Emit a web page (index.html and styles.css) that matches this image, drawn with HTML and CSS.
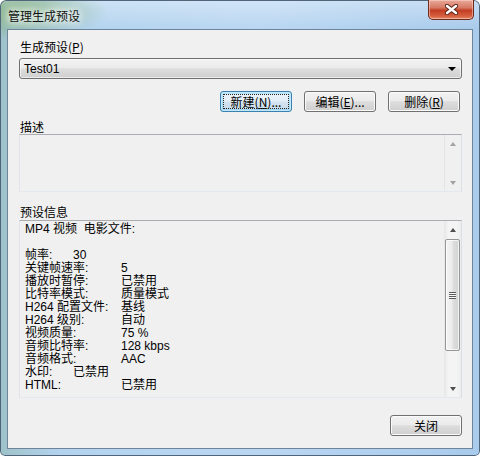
FILE: index.html
```html
<!DOCTYPE html>
<html lang="zh-CN">
<head>
  <meta charset="UTF-8">
  <title>管理生成预设</title>
  <link rel="stylesheet" href="styles.css">
</head>
<body>
<div class="window">
  <div class="titlebar">
    <span class="title">管理生成预设</span>
    <button class="close" title="关闭">
      <svg width="13" height="11" viewBox="0 0 13 11">
        <path d="M2 2l9 7M11 2L2 9" stroke="#5b2418" stroke-width="4.4" stroke-linecap="round"/>
        <path d="M2 2l9 7M11 2L2 9" stroke="#fff" stroke-width="2.4" stroke-linecap="round"/>
      </svg>
    </button>
  </div>

  <div class="client">
    <label class="caption">生成预设(<u>P</u>)</label>
    <div class="combo">
      <span>Test01</span>
      <i class="drop"></i>
    </div>

    <div class="actions">
      <button class="btn default">新建(<u>N</u>)...</button>
      <button class="btn">编辑(<u>E</u>)...</button>
      <button class="btn">删除(<u>R</u>)</button>
    </div>

    <label class="caption gap">描述</label>
    <div class="textbox desc">
      <div class="text"></div>
      <div class="scrollbar off">
        <div class="sb-btn up"></div>
        <div class="track"></div>
        <div class="sb-btn down"></div>
      </div>
    </div>

    <label class="caption gap2">预设信息</label>
    <div class="textbox info">
      <div class="text">
        <div class="row">MP4 视频&nbsp;&nbsp;电影文件:</div>
        <div class="row">&nbsp;</div>
        <div class="row"><span class="k s">帧率:</span>30</div>
        <div class="row"><span class="k">关键帧速率:</span>5</div>
        <div class="row"><span class="k">播放时暂停:</span>已禁用</div>
        <div class="row"><span class="k">比特率模式:</span>质量模式</div>
        <div class="row"><span class="k">H264 配置文件:</span>基线</div>
        <div class="row"><span class="k">H264 级别:</span>自动</div>
        <div class="row"><span class="k">视频质量:</span>75 %</div>
        <div class="row"><span class="k">音频比特率:</span>128 kbps</div>
        <div class="row"><span class="k">音频格式:</span>AAC</div>
        <div class="row"><span class="k s">水印:</span>已禁用</div>
        <div class="row"><span class="k">HTML:</span>已禁用</div>
      </div>
      <div class="scrollbar">
        <div class="sb-btn up"></div>
        <div class="track">
          <div class="thumb"><i></i></div>
        </div>
        <div class="sb-btn down"></div>
      </div>
    </div>

    <div class="footer">
      <button class="btn">关闭</button>
    </div>
  </div>
</div>
</body>
</html>
```

FILE: styles.css
```css
* {
  box-sizing: border-box;
}
body {
  margin: 0;
  font-family: "Liberation Sans", "Noto Sans CJK SC", sans-serif;
  font-size: 12px;
  color: #000;
}
u {
  text-decoration: underline;
  text-underline-offset: 1px;
}

/* window frame */
.window {
  width: 480px;
  height: 456px;
  display: flex;
  flex-direction: column;
  padding: 0 7px 7px 7px;
  border-radius: 6px 6px 5px 5px;
  background:
    radial-gradient(ellipse 110px 34px at 20px 12px, rgba(120, 170, 110, .75), rgba(120, 170, 110, 0) 80%),
    linear-gradient(180deg, rgba(255, 255, 255, .35), rgba(255, 255, 255, 0) 28px),
    linear-gradient(90deg, #9ec2c9 0, #b3d3ee 60px, #bad7f2 260px, #a9cbec 480px);
  box-shadow: inset 0 0 0 1px #51657a;
}
.titlebar {
  height: 29px;
  display: flex;
  justify-content: space-between;
}
.title {
  align-self: center;
  padding-left: 1px;
  margin-top: 1px;
  font-family: "Noto Sans CJK SC", sans-serif;
  font-size: 12px;
  color: #111;
  text-shadow: 0 0 8px #fff, 0 0 8px #fff, 0 0 12px #fff;
}
.close {
  width: 46px;
  height: 20px;
  margin-right: -1px;
  padding: 0;
  border: 1px solid #6e2a1e;
  border-top: none;
  border-radius: 0 0 5px 5px;
  background: linear-gradient(180deg, #e9a99a 0, #d67a64 40%, #c23d22 55%, #d5603f 85%, #e48a6a 100%);
  box-shadow: inset 0 0 0 1px rgba(255, 220, 210, .5);
  display: flex;
  align-items: center;
  justify-content: center;
}

/* dialog body */
.client {
  flex: 1;
  display: flex;
  flex-direction: column;
  padding: 9px 10px 0 11px;
  background: #f0f0f0;
  border: 1px solid #6e849b;
  font-family: "Noto Sans CJK SC", sans-serif;
}
.caption {
  display: block;
  line-height: 15px;
  height: 15px;
  padding-left: 1px;
}
.caption.gap {
  margin-top: 7px;
}
.caption.gap2 {
  margin-top: 12px;
  margin-bottom: 1px;
}

.combo {
  margin-top: 4px;
  height: 21px;
  display: flex;
  align-items: center;
  justify-content: space-between;
  padding: 0 5px 0 4px;
  border: 1px solid #707070;
  border-radius: 3px;
  background: linear-gradient(180deg, #f2f2f2, #ebebeb 45%, #dddddd 52%, #cfcfcf);
  box-shadow: inset 0 0 0 1px rgba(255, 255, 255, .6);
  font-family: "Liberation Sans", "Noto Sans CJK SC", sans-serif;
}
.drop {
  width: 0;
  height: 0;
  border-left: 4px solid transparent;
  border-right: 4px solid transparent;
  border-top: 4px solid #000;
}

.actions {
  margin-top: 12px;
  padding-right: 2px;
  display: flex;
  justify-content: flex-end;
  gap: 12px;
}
.btn {
  width: 72px;
  height: 21px;
  padding: 0;
  font-family: "Noto Sans CJK SC", sans-serif;
  font-size: 12px;
  color: #000;
  border: 1px solid #707070;
  border-radius: 3px;
  background: linear-gradient(180deg, #f2f2f2, #ebebeb 45%, #dddddd 52%, #cfcfcf);
  box-shadow: inset 0 0 0 1px #fbfbfb;
}
.btn.default {
  border-color: #3c7fb1;
  background: linear-gradient(180deg, #eef5fa, #e3eef6 45%, #d4e4f0 52%, #c5d9e8);
  box-shadow: inset 0 0 0 1px #bfe8fb, inset 0 0 0 2px rgba(120, 210, 250, .45);
  outline: 1px dotted #222;
  outline-offset: -4px;
}

/* text areas */
.textbox {
  display: flex;
  border: 1px solid;
  border-color: #abadb3 #dbdfe6 #e3e9ef #e2e3ea;
  background: #f0f0f0;
}
.textbox .text {
  flex: 1;
}
.desc {
  height: 58px;
}
.info {
  height: 178px;
}
.info .text {
  padding: 2px 0 0 5px;
  line-height: 13px;
  white-space: nowrap;
  overflow: hidden;
  font-family: "Liberation Sans", "Noto Sans CJK SC", sans-serif;
}
.row {
  height: 13px;
}
.k {
  display: inline-block;
  width: 96px;
}
.k.s {
  width: 48px;
}

/* scrollbars */
.scrollbar {
  width: 17px;
  display: flex;
  flex-direction: column;
  background: linear-gradient(90deg, #e6e6e6, #f4f4f4 25%, #f4f4f4 75%, #ececec);
}
.scrollbar.off {
  background: #f0f0f0;
  border-left: 1px solid #e4e4e4;
}
.track {
  flex: 1;
  padding: 1px 1px 0 1px;
}
.sb-btn {
  height: 17px;
  display: flex;
  align-items: center;
  justify-content: center;
}
.sb-btn::before {
  content: "";
  border-left: 3.5px solid transparent;
  border-right: 3.5px solid transparent;
}
.sb-btn.up::before {
  border-bottom: 4px solid #4f4f4f;
}
.sb-btn.down::before {
  border-top: 4px solid #4f4f4f;
}
.off .sb-btn.up::before {
  border-bottom-color: #a3a3a3;
}
.off .sb-btn.down::before {
  border-top-color: #a3a3a3;
}
.thumb {
  height: 112px;
  border: 1px solid #969696;
  border-radius: 2px;
  background: linear-gradient(90deg, #f4f4f4, #ececec 45%, #dedede 55%, #d2d2d2);
  box-shadow: inset 0 0 0 1px rgba(255, 255, 255, .7);
  display: flex;
  align-items: center;
  justify-content: center;
}
.thumb i {
  width: 7px;
  height: 7px;
  background: repeating-linear-gradient(180deg, #5c5c5c 0 1px, #f8f8f8 1px 2px);
}

.footer {
  margin-top: 17px;
  display: flex;
  justify-content: flex-end;
}
```
